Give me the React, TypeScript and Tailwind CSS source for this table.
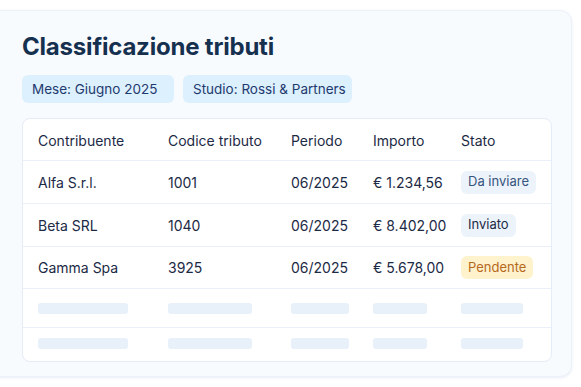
import React from "react";

const rows = [
  { name: "Alfa S.r.l.", code: "1001", period: "06/2025", amount: "€ 1.234,56", status: "Da inviare", cls: "bg-[#edf3fa] text-[#36557f]", h: "h-[43px]" },
  { name: "Beta SRL", code: "1040", period: "06/2025", amount: "€ 8.402,00", status: "Inviato", cls: "bg-[#edf3fa] text-[#1c2a45]", h: "h-[43px]" },
  { name: "Gamma Spa", code: "3925", period: "06/2025", amount: "€ 5.678,00", status: "Pendente", cls: "bg-[#fef3cd] text-[#b7691e]", h: "h-[42px]" },
];

const grid = "grid grid-cols-[130px_123px_82px_88px_1fr] items-center";

function Skeleton() {
  return (
    <>
      <span className="block h-[11px] w-[90px] rounded-[3px] bg-[#e8f0f9]" />
      <span className="block h-[11px] w-[84px] rounded-[3px] bg-[#e8f0f9]" />
      <span className="block h-[11px] w-[58px] rounded-[3px] bg-[#e8f0f9]" />
      <span className="block h-[11px] w-[54px] rounded-[3px] bg-[#e8f0f9]" />
      <span className="block h-[11px] w-[62px] rounded-[3px] bg-[#e8f0f9]" />
    </>
  );
}

export default function App() {
  return (
    <div className="w-[581px] h-[387px] bg-white overflow-hidden pt-[10px]" style={{ fontFamily: "Inter, 'Noto Sans', sans-serif" }}>
      <div className="-ml-[20px] w-[592px] h-[367px] rounded-[12px] border border-[#edf2f9] bg-[#f8fbfe] shadow-[0_1px_3px_rgba(160,185,220,0.25)] pl-[41px] pt-[21px]">
        <h1 className="text-[24px] leading-[30px] font-bold text-[#16304f] tracking-[-0.2px]">Classificazione tributi</h1>
        <div className="flex gap-[9px] mt-[13px]">
          <span className="h-[28px] w-[152px] flex items-center pl-[10px] rounded-[6px] bg-[#dcf0fe] text-[13.5px] text-[#1f3a6e] whitespace-nowrap">Mese: Giugno 2025</span>
          <span className="h-[28px] w-[169px] flex items-center pl-[10px] rounded-[6px] bg-[#dcf0fe] text-[13.5px] text-[#1f3a6e] whitespace-nowrap">Studio: Rossi &amp; Partners</span>
        </div>
        <div className="mt-[15px] w-[530px] h-[244px] flex flex-col rounded-[8px] border border-[#e4edf8] bg-white overflow-hidden text-[14px] text-[#1c2a45]">
          <div className={`${grid} h-[42px] shrink-0 border-b border-[#e9f0f9] pl-[15px] pt-[1px]`}>
            <span>Contribuente</span>
            <span>Codice tributo</span>
            <span>Periodo</span>
            <span>Importo</span>
            <span>Stato</span>
          </div>
          {rows.map((r) => (
            <div key={r.name} className={`${grid} ${r.h} shrink-0 border-b border-[#e9f0f9] pl-[15px]`}>
              <span>{r.name}</span>
              <span>{r.code}</span>
              <span>{r.period}</span>
              <span>{r.amount}</span>
              <span>
                <span className={`inline-flex h-[23px] items-center px-[7px] rounded-[6px] text-[13px] ${r.cls}`}>{r.status}</span>
              </span>
            </div>
          ))}
          <div className={`${grid} h-[39px] shrink-0 border-b border-[#e9f0f9] pl-[15px]`}>
            <Skeleton />
          </div>
          <div className={`${grid} flex-1 pl-[15px] pb-[2px]`}>
            <Skeleton />
          </div>
        </div>
      </div>
    </div>
  );
}
